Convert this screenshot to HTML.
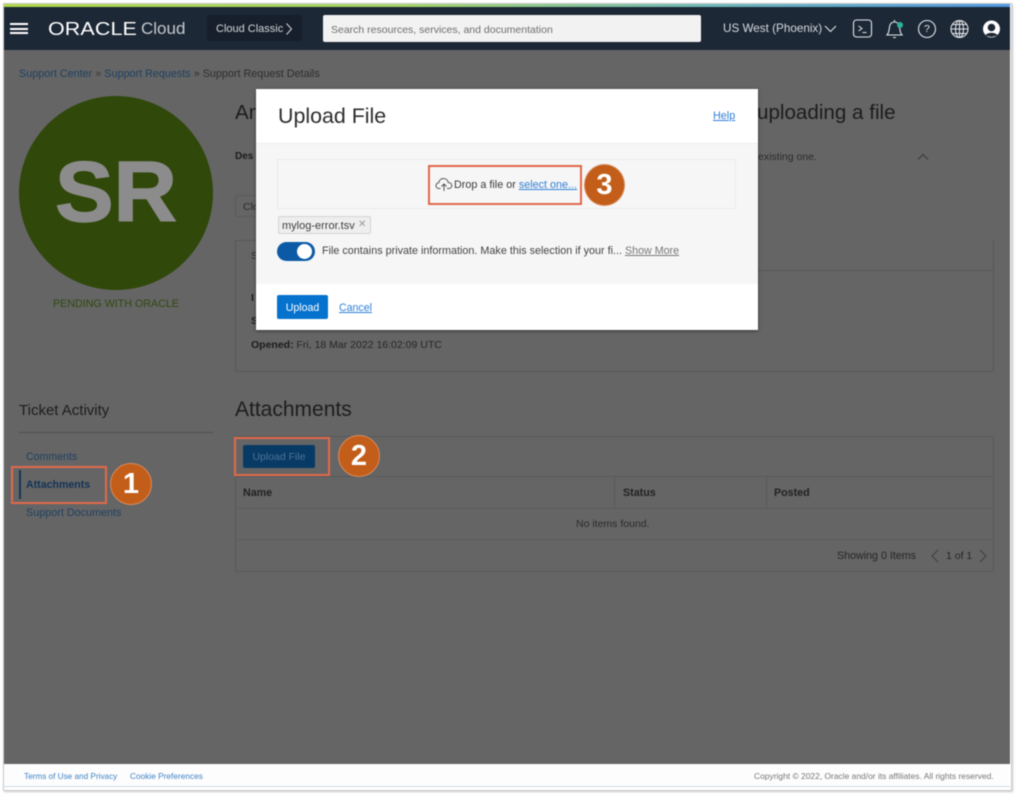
<!DOCTYPE html>
<html><head><meta charset="utf-8"><style>
html,body{margin:0;padding:0;background:#fff}
#p{position:relative;width:1020px;height:797px;overflow:hidden;background:#fff;font-family:"Liberation Sans",sans-serif;filter:blur(.5px)}
#p div,#p a,#p span.a{position:absolute;white-space:nowrap}
.t{font-size:11px;line-height:14px}
u{text-decoration:underline}
</style></head><body><div id="p">
<div style="left:3px;top:3px;width:1009px;height:788px;border:1px solid #c9c9c9;box-sizing:border-box;box-shadow:1px 1px 2px #ccc"></div>
<div style="left:4px;top:4px;width:1006px;height:3px;background:linear-gradient(90deg,#b0d84a 0%,#a5d46a 40%,#6fb8b8 70%,#4f97e0 100%)"></div>
<div style="left:4px;top:7px;width:1006px;height:43px;background:#1c2836"></div>
<div style="left:4px;top:50px;width:1006px;height:714px;background:#656565"></div>
<div style="left:4px;top:764px;width:1006px;height:22px;background:#fdfdfd;border-bottom:1px solid #cfdde8"></div>

<!-- header -->
<div style="left:10px;top:23px;width:18px;height:2px;background:#fff"></div>
<div style="left:10px;top:28px;width:18px;height:2px;background:#fff"></div>
<div style="left:10px;top:32px;width:18px;height:2px;background:#fff"></div>
<div style="left:48px;top:19px;font-size:18.5px;line-height:20px;color:#fff;letter-spacing:.1px;transform:scaleX(1.16);transform-origin:left">ORACLE</div>
<div style="left:141px;top:18px;font-size:17px;line-height:22px;color:#c5c8cc">Cloud</div>
<div style="left:207px;top:15px;width:95px;height:26px;background:#161f2b"></div>
<div style="left:216px;top:22px;font-size:11px;line-height:14px;color:#d5d7da">Cloud Classic</div>
<svg style="position:absolute;left:285px;top:23px" width="8" height="12" viewBox="0 0 8 12"><path d="M1.500 .5L6.500 6L1.500 11.500" fill="none" stroke="#d5d7da" stroke-width="1"/></svg>
<div style="left:323px;top:15px;width:378px;height:27px;background:#f2f2f2;border-radius:2px"></div>
<div style="left:331px;top:23px;font-size:10.5px;line-height:14px;color:#6e6e6e">Search resources, services, and documentation</div>
<div style="left:723px;top:22px;font-size:11.7px;line-height:14px;color:#d5d9de">US West (Phoenix)</div>
<svg style="position:absolute;left:824px;top:25px" width="13" height="8" viewBox="0 0 13 8"><path d="M1 1L6.500 6.500L12 1" fill="none" stroke="#e0e3e6" stroke-width="1.100"/></svg>
<svg style="position:absolute;left:850px;top:15px" width="165" height="28" viewBox="0 0 165 28" fill="none" stroke="#e4e6e9" stroke-width="1.100">
<rect x="3.500" y="5" width="18" height="17" rx="3"/><path d="M8.500 11L12 13.500L8.500 16M12.500 17.500H16.500" stroke-width="1"/>
<path d="M37 20C39 18 39 15 39.500 12C40 8.500 42 7 44.500 7C47 7 49 8.500 49.500 12C50 15 50 18 52 20ZM43 22.500H46M44.500 7V5" />
<circle cx="77" cy="14" r="8.500"/>
<circle cx="109.500" cy="14" r="8.500"/><ellipse cx="109.500" cy="14" rx="4" ry="8.500"/><path d="M101 14H118M102.500 9.500H116.500M102.500 18.500H116.500M109.500 5.500V22.500"/>
<circle cx="141.500" cy="14" r="8.500" fill="#fff" stroke="none"/>
<circle cx="141.500" cy="12.500" r="3.800" fill="#1c2836" stroke="none"/><path d="M135.500 20.500C136.500 17 146.500 17 147.500 20.500L141.500 22Z" fill="#1c2836" stroke="none"/>
<circle cx="50" cy="10" r="3" fill="#2cb494" stroke="none"/>
</svg>
<div style="left:924px;top:22px;font-size:10.5px;line-height:14px;color:#e4e6e9">?</div>

<!-- breadcrumb -->
<div class="t" style="left:19px;top:67px;font-size:10.8px;color:#1f4060">Support Center <span style="color:#3a3a3a">»</span> Support Requests <span style="color:#2e2e2e">» Support Request Details</span></div>

<!-- circle -->
<div style="left:19px;top:96px;width:194px;height:194px;border-radius:50%;background:#30480a"></div>
<div style="left:19px;top:148px;width:194px;text-align:center;font-size:85px;line-height:90px;font-weight:bold;color:#8c8c8c;-webkit-text-stroke:1.5px #8c8c8c;transform:scaleX(1.03)">SR</div>
<div style="left:19px;top:297px;width:194px;text-align:center;font-size:10.7px;line-height:14px;color:#2f4a10">PENDING WITH ORACLE</div>

<!-- detail behind modal -->
<div style="left:235px;top:100px;font-size:20.6px;line-height:26px;color:#1c1c1c">An</div>
<div style="left:757px;top:100px;font-size:20.6px;line-height:26px;color:#1c1c1c">uploading a file</div>
<div class="t" style="left:235px;top:150px;font-size:10px;font-weight:bold;color:#1c1c1c">Des</div>
<div class="t" style="left:758px;top:150px;font-size:10.5px;color:#2b2b2b">existing one.</div>
<svg style="position:absolute;left:917px;top:153px" width="12" height="8" viewBox="0 0 12 8"><path d="M1 6.500L6 1.500L11 6.500" fill="none" stroke="#3a3a3a" stroke-width="1"/></svg>
<div style="left:235px;top:195px;width:40px;height:22px;border:1px solid #5a5a5a;border-radius:2px;box-sizing:border-box"></div>
<div class="t" style="left:243px;top:200px;font-size:10.5px;color:#2b2b2b">Clo</div>
<div style="left:235px;top:240px;width:759px;height:132px;box-sizing:border-box;border:1px solid #585858;border-top:0"></div>
<div style="left:235px;top:240px;width:22px;height:1px;background:#585858"></div>
<div style="left:235px;top:240px;width:1px;height:30px;background:#585858"></div>
<div style="left:758px;top:270px;width:236px;height:1px;background:#585858"></div>
<div class="t" style="left:251px;top:249px;font-size:10.5px;color:#2b2b2b">S</div>
<div class="t" style="left:251px;top:291px;font-size:10.5px;font-weight:bold;color:#1c1c1c">I</div>
<div class="t" style="left:251px;top:314px;font-size:10.500px;font-weight:bold;color:#1c1c1c">S</div>
<div class="t" style="left:251px;top:338px;font-size:10.5px;color:#262626"><b style="color:#1c1c1c">Opened:</b> Fri, 18 Mar 2022 16:02:09 UTC</div>

<!-- left nav -->
<div style="left:19px;top:402px;font-size:15px;line-height:18px;color:#1d1d1d">Ticket Activity</div>
<div style="left:19px;top:432px;width:194px;height:1px;background:#4e4e4e"></div>
<div class="t" style="left:26px;top:450px;font-size:10.600px;color:#1f4060">Comments</div>
<div style="left:19px;top:470px;width:2px;height:29px;background:#16375a"></div>
<div class="t" style="left:26px;top:478px;font-size:10.6px;font-weight:bold;color:#123456">Attachments</div>
<div class="t" style="left:26px;top:506px;font-size:10.8px;color:#1f4060">Support Documents</div>

<!-- attachments -->
<div style="left:235px;top:398px;font-size:21px;line-height:24px;color:#1d1d1d">Attachments</div>
<div style="left:235px;top:436px;width:759px;height:136px;box-sizing:border-box;border:1px solid #595959"></div>
<div style="left:235px;top:476px;width:759px;height:1px;background:#595959"></div>
<div style="left:235px;top:508px;width:759px;height:1px;background:#5c5c5c"></div>
<div style="left:235px;top:539px;width:759px;height:1px;background:#5c5c5c"></div>
<div style="left:614px;top:476px;width:1px;height:32px;background:#595959"></div>
<div style="left:766px;top:476px;width:1px;height:32px;background:#595959"></div>
<div style="left:243px;top:445px;width:72px;height:23px;background:#083a66;border-radius:2px"></div>
<div class="t" style="left:243px;top:450px;width:72px;text-align:center;font-size:10.500px;color:#4f7391">Upload File</div>
<div class="t" style="left:243px;top:486px;font-size:10.700px;font-weight:bold;color:#222">Name</div>
<div class="t" style="left:623px;top:486px;font-size:10.700px;font-weight:bold;color:#222">Status</div>
<div class="t" style="left:774px;top:486px;font-size:10.700px;font-weight:bold;color:#222">Posted</div>
<div class="t" style="left:576px;top:517px;font-size:10.5px;color:#2b2b2b">No items found.</div>
<div class="t" style="left:837px;top:549px;font-size:10.700px;color:#262626">Showing 0 Items</div>
<div class="t" style="left:946px;top:549px;font-size:10.500px;color:#262626">1 of 1</div>
<svg style="position:absolute;left:930px;top:549px" width="60" height="14" viewBox="0 0 60 14" fill="none" stroke="#3f3f3f" stroke-width="1"><path d="M8 1L2 7L8 13M50 1L56 7L50 13"/></svg>

<!-- modal -->
<div style="left:256px;top:89px;width:502px;height:241px;background:#fff;box-shadow:0 1px 3px rgba(0,0,0,.5)"></div>
<div style="left:256px;top:143px;width:502px;height:141px;background:#f6f6f6;border-top:1px solid #ececec;box-sizing:border-box"></div>
<div style="left:278px;top:104px;font-size:21.400px;line-height:24px;color:#2d2d2d">Upload File</div>
<div class="t" style="left:713px;top:109px;font-size:10.8px;color:#2f7fd6"><u>Help</u></div>
<div style="left:277px;top:159px;width:459px;height:50px;box-sizing:border-box;border:1px dotted #e0e0e0"></div>
<svg style="position:absolute;left:435px;top:177px" width="18" height="15" viewBox="0 0 18 15" fill="none" stroke="#555" stroke-width="1"><path d="M5.500 11.500H4C2 11.500 1 10 1 8.500C1 7 2.200 5.800 3.700 5.800C4.200 3 6.200 1.500 8.500 1.500C11 1.500 12.800 3.200 13.200 5.500C15.200 5.500 16.800 6.800 16.800 8.500C16.800 10.200 15.500 11.500 13.500 11.500H12M9 14V7M6.500 9.500L9 7L11.500 9.500"/></svg>
<div class="t" style="left:454px;top:178px;font-size:10.8px;color:#3a3a3a">Drop a file or <u style="color:#2f7fd6">select one...</u></div>
<div style="left:278px;top:216px;width:93px;height:18px;box-sizing:border-box;background:#eee;border:1px solid #d4d4d4;border-radius:2px"></div>
<div class="t" style="left:282px;top:219px;font-size:11px;color:#404040">mylog-error.tsv</div>
<div class="t" style="left:358px;top:218px;font-size:10px;color:#999">✕</div>
<div style="left:277px;top:242px;width:38px;height:19px;border-radius:10px;background:#0c5aa6"></div>
<div style="left:297px;top:244px;width:15px;height:15px;border-radius:50%;background:#fff"></div>
<div class="t" style="left:322px;top:244px;font-size:10.8px;color:#444">File contains private information. Make this selection if your fi...</div>
<div class="t" style="left:625px;top:244px;font-size:10.7px;color:#777"><u>Show More</u></div>
<div style="left:277px;top:295px;width:51px;height:24px;background:#0572ce;border-radius:2px"></div>
<div class="t" style="left:277px;top:301px;width:51px;text-align:center;font-size:10.6px;color:#fff">Upload</div>
<div class="t" style="left:339px;top:301px;font-size:10.6px;color:#2f7fd6"><u>Cancel</u></div>

<!-- callouts -->
<div style="left:428px;top:165px;width:154px;height:40px;box-sizing:border-box;border:2px solid #e2694a"></div>
<div style="left:584px;top:164px;width:41px;height:42px;border-radius:50%;background:#c25e1a;border:1px solid #d98a5a;box-sizing:border-box;color:#fff;text-align:center;font-size:29px;line-height:40px;font-weight:bold">3</div>
<div style="left:11px;top:466px;width:96px;height:38px;box-sizing:border-box;border:2px solid #e2694a"></div>
<div style="left:110px;top:463px;width:42px;height:42px;border-radius:50%;background:#c25e1a;border:1px solid #d98a5a;box-sizing:border-box;color:#fff;text-align:center;font-size:29px;line-height:40px;font-weight:bold">1</div>
<div style="left:234px;top:437px;width:96px;height:39px;box-sizing:border-box;border:2px solid #e2694a"></div>
<div style="left:338px;top:435px;width:42px;height:42px;border-radius:50%;background:#c25e1a;border:1px solid #d98a5a;box-sizing:border-box;color:#fff;text-align:center;font-size:29px;line-height:40px;font-weight:bold">2</div>

<!-- footer -->
<div style="left:24px;top:771px;font-size:8.2px;line-height:12px;color:#3f83c4">Terms of Use and Privacy</div>
<div style="left:130px;top:770px;font-size:8.3px;line-height:12px;color:#3f83c4">Cookie Preferences</div>
<div style="left:754px;top:770px;font-size:8.450px;line-height:12px;color:#777">Copyright © 2022, Oracle and/or its affiliates. All rights reserved.</div>
</div></body></html>
